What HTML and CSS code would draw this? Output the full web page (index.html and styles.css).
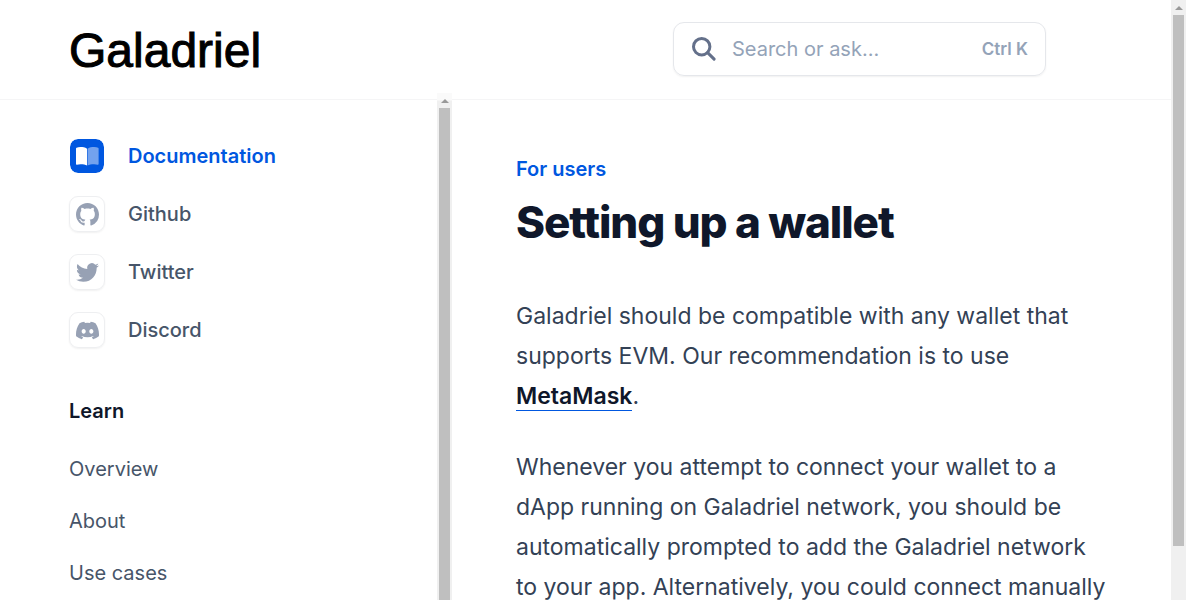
FILE: index.html
```html
<!DOCTYPE html>
<html lang="en">
<head>
<meta charset="utf-8">
<meta name="viewport" content="width=device-width, initial-scale=1">
<title>Setting up a wallet - Galadriel</title>
<link rel="stylesheet" href="styles.css">
</head>
<body>
<div class="page">
  <div class="site">
    <header class="topbar">
      <a class="logo" href="#">Galadriel</a>
      <label class="search">
        <svg class="search-icon" viewBox="0 0 24 24" aria-hidden="true"><circle cx="9.7" cy="9.7" r="8.2"/><path d="M15.6 15.600l6.500 6.500"/></svg>
        <input class="search-input" type="text" placeholder="Search or ask..." aria-label="Search or ask">
        <span class="shortcut">Ctrl K</span>
      </label>
    </header>
    <div class="columns">
      <nav class="sidebar">
        <ul class="anchors">
          <li><a class="anchor anchor-active" href="#"><span class="tile tile-active"><svg viewBox="0 0 24 20" aria-hidden="true"><path fill="#fff" d="M11.5 1.8C9.5.6 7 .2 4.700.2 3 .2 1.600.5.6.9.2 1.100 0 1.400 0 1.800v16c0 .6.500.9 1 .7 1-.3 2.200-.5 3.700-.5 2.800 0 5.300.6 6.800 1.300z"/><path fill="#fff" fill-opacity=".45" d="M12.100 1.800C14.100.6 16.600.2 18.900.2c1.700 0 3.100.3 4.100.7.400.2.600.5.600.9v16c0 .6-.500.9-1 .7-1-.3-2.200-.5-3.700-.5-2.800 0-5.300.6-6.800 1.300z"/></svg></span>Documentation</a></li>
          <li><a class="anchor" href="#"><span class="tile"><svg viewBox="0 0 16 16" aria-hidden="true"><path d="M8 0C3.580 0 0 3.580 0 8c0 3.540 2.290 6.530 5.470 7.590.4.070.55-.17.55-.38 0-.19-.01-.82-.01-1.490-2.010.37-2.530-.49-2.690-.94-.09-.23-.48-.94-.82-1.130-.28-.15-.68-.52-.01-.53.63-.01 1.080.58 1.230.82.72 1.210 1.870.87 2.330.66.070-.52.280-.87.510-1.070-1.780-.2-3.640-.89-3.640-3.950 0-.87.310-1.590.820-2.150-.080-.2-.360-1.020.080-2.120 0 0 .670-.210 2.200.820.640-.180 1.320-.270 2-.270s1.360.090 2 .270c1.530-1.040 2.200-.820 2.200-.820.440 1.100.160 1.920.080 2.120.510.560.820 1.270.820 2.150 0 3.070-1.870 3.750-3.650 3.950.290.250.540.730.540 1.480 0 1.070-.010 1.930-.010 2.200 0 .210.150.460.550.380A8.010 8.010 0 0 0 16 8c0-4.420-3.580-8-8-8z"/></svg></span>Github</a></li>
          <li><a class="anchor" href="#"><span class="tile"><svg viewBox="0 0 24 24" aria-hidden="true"><path d="M23.953 4.570a10 10 0 0 1-2.825.775 4.958 4.958 0 0 0 2.163-2.723c-.951.555-2.005.959-3.127 1.184a4.920 4.920 0 0 0-8.384 4.482C7.690 8.095 4.067 6.130 1.640 3.162a4.822 4.822 0 0 0-.666 2.475c0 1.710.870 3.213 2.188 4.096a4.904 4.904 0 0 1-2.228-.616v.060a4.923 4.923 0 0 0 3.946 4.827 4.996 4.996 0 0 1-2.212.085 4.936 4.936 0 0 0 4.604 3.417 9.867 9.867 0 0 1-6.102 2.105c-.390 0-.779-.023-1.170-.067a13.995 13.995 0 0 0 7.557 2.209c9.053 0 13.998-7.496 13.998-13.985 0-.210 0-.420-.015-.630A9.935 9.935 0 0 0 24 4.590z"/></svg></span>Twitter</a></li>
          <li><a class="anchor" href="#"><span class="tile"><svg viewBox="0 0 24 24" aria-hidden="true"><path d="M20.317 4.370a19.791 19.791 0 0 0-4.885-1.515.074.074 0 0 0-.079.037c-.210.375-.444.864-.608 1.250a18.270 18.270 0 0 0-5.487 0 12.640 12.640 0 0 0-.617-1.250.077.077 0 0 0-.079-.037A19.736 19.736 0 0 0 3.677 4.370a.070.070 0 0 0-.032.027C.533 9.046-.320 13.580.099 18.057a.082.082 0 0 0 .031.057 19.900 19.900 0 0 0 5.993 3.030.078.078 0 0 0 .084-.028c.462-.630.874-1.295 1.226-1.994a.076.076 0 0 0-.041-.106 13.107 13.107 0 0 1-1.872-.892.077.077 0 0 1-.008-.128c.126-.094.252-.192.372-.292a.074.074 0 0 1 .077-.010c3.928 1.793 8.180 1.793 12.062 0a.074.074 0 0 1 .078.010c.120.098.246.198.373.292a.077.077 0 0 1-.006.127 12.299 12.299 0 0 1-1.873.892.077.077 0 0 0-.041.107c.360.698.772 1.362 1.225 1.993a.076.076 0 0 0 .084.028 19.839 19.839 0 0 0 6.002-3.030.077.077 0 0 0 .032-.054c.500-5.177-.838-9.674-3.549-13.660a.061.061 0 0 0-.031-.030zM8.020 15.330c-1.183 0-2.157-1.085-2.157-2.419 0-1.333.956-2.419 2.157-2.419 1.210 0 2.176 1.096 2.157 2.420 0 1.333-.956 2.418-2.157 2.418zm7.975 0c-1.183 0-2.157-1.085-2.157-2.419 0-1.333.955-2.419 2.157-2.419 1.210 0 2.176 1.096 2.157 2.420 0 1.333-.946 2.418-2.157 2.418z"/></svg></span>Discord</a></li>
        </ul>
        <h2 class="group-title">Learn</h2>
        <ul class="links">
          <li><a href="#">Overview</a></li>
          <li><a href="#">About</a></li>
          <li><a href="#">Use cases</a></li>
        </ul>
      </nav>
      <div class="scrollbar scrollbar-inner" aria-hidden="true"><span class="scroll-arrow"></span><span class="scroll-thumb"></span></div>
      <main class="content">
        <p class="eyebrow">For users</p>
        <h1 class="title">Setting up a wallet</h1>
        <p class="text">Galadriel should be compatible with any wallet that supports EVM. Our recommendation is to use <a class="text-link" href="#">MetaMask</a>.</p>
        <p class="text">Whenever you attempt to connect your wallet to a dApp running on Galadriel network, you should be automatically prompted to add the Galadriel network to your app. Alternatively, you could connect manually</p>
      </main>
    </div>
  </div>
  <div class="scrollbar" aria-hidden="true"><span class="scroll-arrow"></span><span class="scroll-thumb scroll-thumb-page"></span></div>
</div>
</body>
</html>
```
FILE: styles.css
```css
* { box-sizing: border-box; }

body {
  margin: 0;
  background: #fff;
  color: #334155;
  font-family: Inter, "Liberation Sans", sans-serif;
  font-size: 20px;
  line-height: 30px;
}

a { color: inherit; text-decoration: none; }
ul { list-style: none; margin: 0; padding: 0; }

.page { display: flex; height: 100vh; overflow: hidden; }
.site { flex: 1; min-width: 0; display: flex; flex-direction: column; }

.topbar {
  display: flex;
  align-items: center;
  justify-content: space-between;
  flex-shrink: 0;
  height: 100px;
  padding: 0 125px 2px 69px;
  border-bottom: 1px solid #f5f5f6;
}

.logo {
  padding-top: 4px;
  color: #000;
  font-family: "Liberation Sans", Arial, sans-serif;
  font-size: 48px;
  line-height: 56px;
  -webkit-text-stroke: 1px #000;
}

.search {
  display: flex;
  align-items: center;
  gap: 16px;
  width: 373px;
  height: 54px;
  padding: 0 17px 0 18px;
  border: 1px solid #e5e7eb;
  border-radius: 11px;
  box-shadow: 0 1px 2px rgba(0, 0, 0, .06);
}
.search-icon {
  width: 24px;
  height: 24px;
  flex-shrink: 0;
  fill: none;
  stroke: #64708a;
  stroke-width: 3;
  stroke-linecap: round;
}
.search-input {
  flex: 1;
  min-width: 0;
  padding: 0;
  border: 0;
  outline: 0;
  background: none;
  color: #334155;
  font: inherit;
}
.search-input::placeholder { color: #94a3b8; opacity: 1; }
.shortcut { color: #94a3b8; font-size: 17px; font-weight: 600; }

.columns { flex: 1; min-height: 0; display: flex; }

.sidebar {
  width: 437px;
  flex-shrink: 0;
  padding: 38px 24px 0 69px;
  overflow: hidden;
}
.anchors { display: grid; gap: 22px; }
.anchor {
  display: flex;
  align-items: center;
  gap: 23px;
  color: #475569;
  font-weight: 500;
}
.anchor-active { color: #0057e0; font-weight: 600; }
.tile {
  display: flex;
  align-items: center;
  justify-content: center;
  width: 36px;
  height: 36px;
  border: 1px solid #eeeff1;
  border-radius: 9px;
  box-shadow: 0 1px 2px rgba(0, 0, 0, .06);
}
.tile svg { width: 23px; height: 23px; fill: #97a1b4; }
.tile-active {
  border-color: #fff;
  background: #0057e0;
  background-clip: padding-box;
  box-shadow: none;
}

.group-title {
  margin: 48px 0 28px;
  color: #0f172a;
  font-size: 20px;
  font-weight: 600;
  line-height: 30px;
}
.links { display: grid; gap: 22px; color: #475569; }

.scrollbar {
  display: flex;
  flex-direction: column;
  align-items: center;
  flex-shrink: 0;
  width: 15px;
  background: #f0f0f0;
}
.scroll-arrow {
  margin: 6px 0 5px;
  border: solid transparent;
  border-width: 0 4px 4px;
  border-bottom-color: #999;
}
.scroll-thumb { flex: 1; width: 11px; background: #bfbfbf; }
.scroll-thumb-page { flex: none; height: 88.5%; }
.scrollbar-inner { margin-top: -7px; background: linear-gradient(#fafafa 7px, #f0f0f0 8px); }

.content { flex: 1; min-width: 0; padding: 54px 60px 0 64px; }
.eyebrow { margin: 0; color: #0057e0; font-weight: 600; }
.title {
  margin: 9px 0 45px;
  color: #0f172a;
  font-size: 44px;
  font-weight: 800;
  line-height: 58px;
  letter-spacing: -0.025em;
}
.text { margin: 0 0 31px; font-size: 23px; line-height: 40px; }
.text-link {
  border-bottom: 1px solid #0057e0;
  color: #0f172a;
  font-weight: 600;
}
```
